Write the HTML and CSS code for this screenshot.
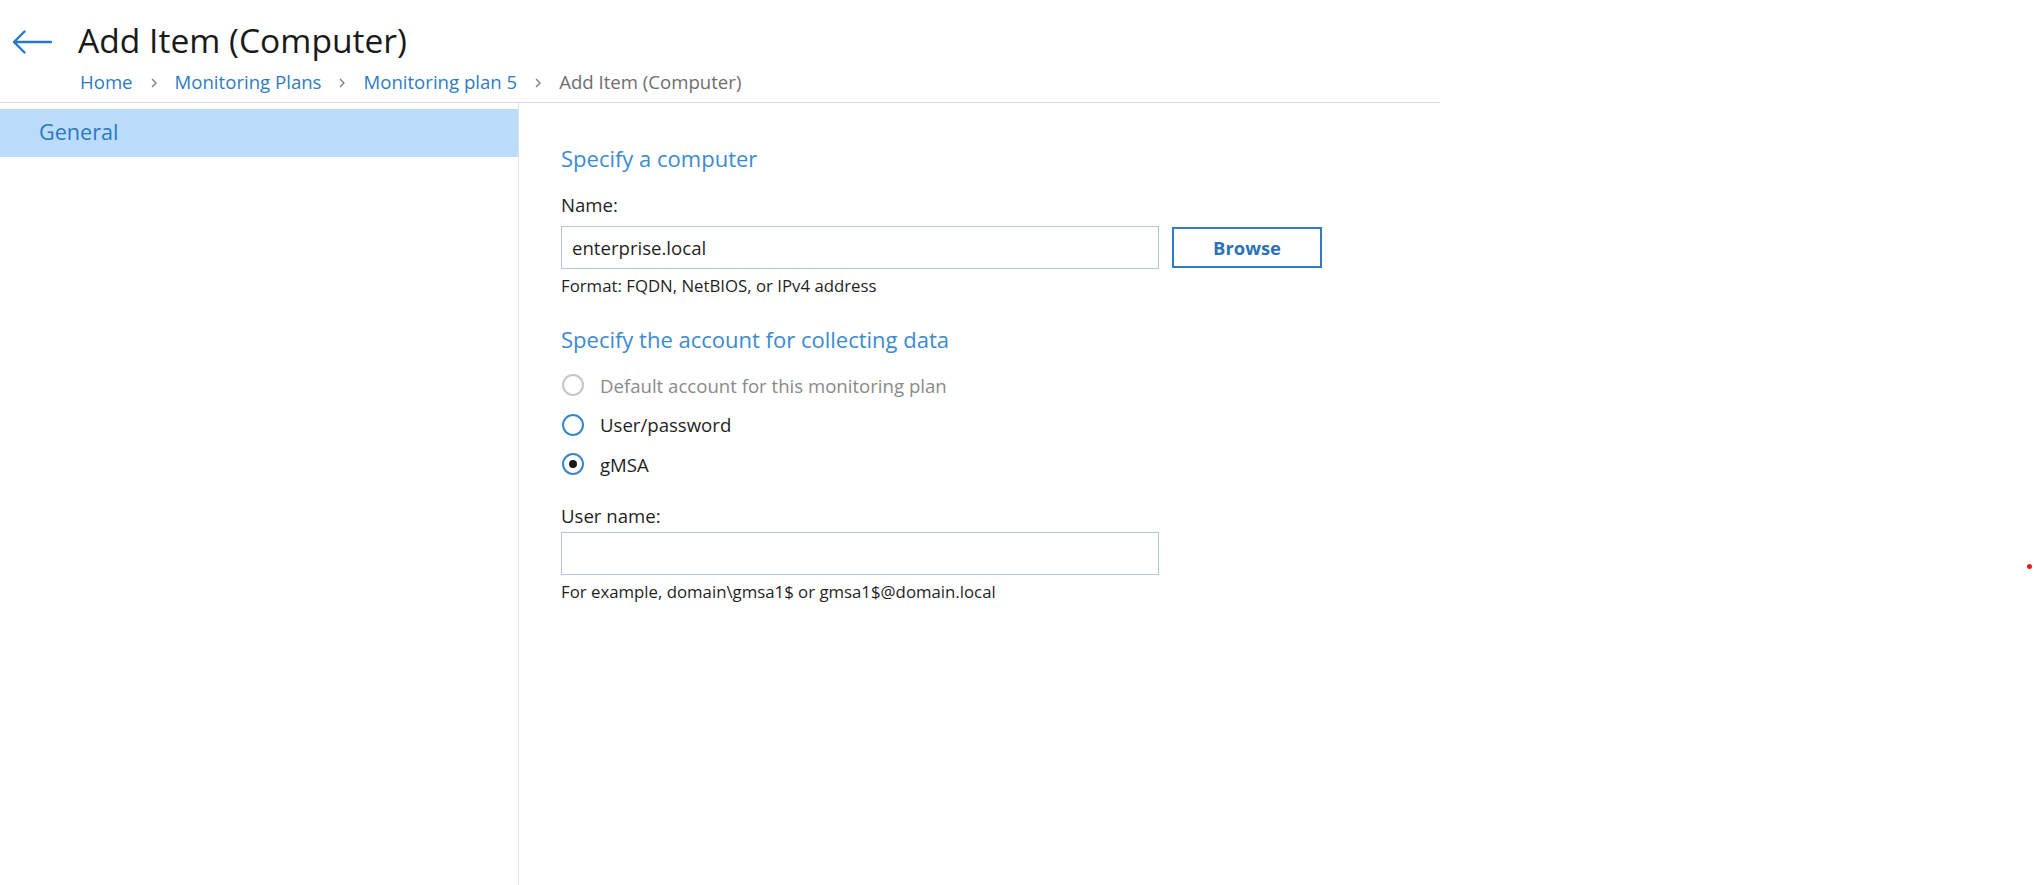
FILE: index.html
```html
<!DOCTYPE html>
<html lang="en">
<head>
<meta charset="utf-8">
<title>Add Item (Computer)</title>
<link rel="stylesheet" href="styles.css">
</head>
<body>
<div class="page">
  <header class="header">
    <div class="title-row">
      <svg class="back" width="40" height="24" viewBox="0 0 40 24" aria-hidden="true">
        <path d="M2 12 H39 M2 12 L12.5 1.5 M2 12 L12.5 22.5" fill="none" stroke="#2a78c2" stroke-width="2.4" stroke-linecap="round"/>
      </svg>
      <h1 class="title">Add Item (Computer)</h1>
    </div>
    <nav class="crumbs">
      <a class="crumb">Home</a>
      <svg class="chev" width="6" height="10" viewBox="0 0 6 10"><path d="M1 1 L5 5 L1 9" fill="none" stroke="#777" stroke-width="1.2"/></svg>
      <a class="crumb">Monitoring Plans</a>
      <svg class="chev" width="6" height="10" viewBox="0 0 6 10"><path d="M1 1 L5 5 L1 9" fill="none" stroke="#777" stroke-width="1.2"/></svg>
      <a class="crumb">Monitoring plan 5</a>
      <svg class="chev" width="6" height="10" viewBox="0 0 6 10"><path d="M1 1 L5 5 L1 9" fill="none" stroke="#777" stroke-width="1.2"/></svg>
      <span class="crumb current">Add Item (Computer)</span>
    </nav>
  </header>
  <div class="main">
    <aside class="side">
      <div class="side-item active">General</div>
    </aside>
    <section class="content">
      <h2 class="section-title first">Specify a computer</h2>
      <label class="field-label">Name:</label>
      <div class="name-row">
        <div class="input">enterprise.local</div>
        <button class="btn">Browse</button>
      </div>
      <div class="hint">Format: FQDN, NetBIOS, or IPv4 address</div>
      <h2 class="section-title second">Specify the account for collecting data</h2>
      <div class="radios">
        <div class="radio disabled"><span class="circle"></span><span>Default account for this monitoring plan</span></div>
        <div class="radio"><span class="circle"></span><span>User/password</span></div>
        <div class="radio checked"><span class="circle"><span class="dot"></span></span><span>gMSA</span></div>
      </div>
      <label class="field-label user">User name:</label>
      <div class="input"></div>
      <div class="hint">For example, domain\gmsa1$ or gmsa1$@domain.local</div>
    </section>
  </div>
</div>
<div class="red-dot"></div>
</body>
</html>
```

FILE: styles.css
```css
html, body {
  margin: 0;
  padding: 0;
  background: #ffffff;
}
body {
  font-family: "Open Sans", "Noto Sans", sans-serif;
  color: #1f1f1f;
  width: 2034px;
  height: 885px;
  overflow: hidden;
  position: relative;
}
.page {
  width: 1439px;
  height: 885px;
  display: flex;
  flex-direction: column;
}
.header {
  height: 103px;
  box-sizing: border-box;
  border-bottom: 1px solid #dadada;
  flex: none;
}
.title-row {
  display: flex;
  align-items: center;
  height: 58px;
  padding-top: 22px;
  box-sizing: border-box;
}
.back {
  margin-left: 12px;
  margin-top: 4px;
  flex: none;
}
.title {
  margin: 0 0 0 26px;
  font-size: 33.6px;
  font-weight: 400;
  line-height: 40px;
  color: #1a1a1a;
}
.crumbs {
  display: flex;
  align-items: center;
  gap: 18px;
  padding-left: 80px;
  margin-top: 12px;
  font-size: 18.6px;
  line-height: 24px;
}
.crumb {
  color: #2f7bc3;
}
.crumb.current {
  color: #6e6e6e;
}
.chev {
  flex: none;
  margin-top: 2px;
}
.main {
  flex: 1;
  display: flex;
  min-height: 0;
}
.side {
  width: 518px;
  flex: none;
  border-right: 1px solid #e2e2e2;
  padding-top: 6px;
}
.side-item {
  height: 48px;
  line-height: 46px;
  padding-left: 39px;
  font-size: 21.6px;
  color: #2b79c2;
}
.side-item.active {
  background: #bbdcfa;
}
.content {
  padding-left: 42px;
  padding-top: 40px;
  display: flex;
  flex-direction: column;
  align-items: flex-start;
}
.section-title {
  margin: 0;
  font-size: 22px;
  font-weight: 400;
  line-height: 30px;
  color: #3a8bd2;
}
.section-title.second {
  margin-top: 27px;
}
.field-label {
  font-size: 18.6px;
  line-height: 24px;
  margin-top: 20px;
  color: #1f1f1f;
}
.field-label.user {
  margin-top: 20px;
}
.name-row {
  display: flex;
  align-items: center;
  gap: 13px;
  margin-top: 8.5px;
}
.input {
  width: 598px;
  height: 43px;
  box-sizing: border-box;
  border: 1px solid #b4c7da;
  padding: 0 10px;
  font-size: 18.6px;
  line-height: 41px;
  color: #1f1f1f;
}
.content > .input {
  margin-top: 4px;
}
.btn {
  width: 150px;
  height: 41px;
  box-sizing: border-box;
  border: 2px solid #2f7bc9;
  background: #ffffff;
  color: #2c72b8;
  font-family: "Open Sans", "Noto Sans", sans-serif;
  font-size: 18.4px;
  font-weight: 700;
  padding: 0;
}
.hint {
  font-size: 16.8px;
  line-height: 22px;
  margin-top: 6px;
  color: #1f1f1f;
}
.radios {
  display: flex;
  flex-direction: column;
  margin-top: 12px;
}
.radio {
  display: flex;
  align-items: center;
  gap: 16px;
  height: 39.5px;
  padding-left: 1px;
  font-size: 18.6px;
  color: #1f1f1f;
}
.radio.disabled {
  color: #8a8a8a;
}
.circle {
  width: 22px;
  height: 22px;
  box-sizing: border-box;
  border: 2px solid #3a86cc;
  border-radius: 50%;
  display: flex;
  align-items: center;
  justify-content: center;
  flex: none;
}
.radio.disabled .circle {
  border-color: #c6c6c6;
}
.dot {
  width: 8px;
  height: 8px;
  border-radius: 50%;
  background: #1a1a1a;
}
.red-dot {
  position: absolute;
  left: 2027px;
  top: 564px;
  width: 5px;
  height: 5px;
  border-radius: 50%;
  background: #e02020;
}
```
